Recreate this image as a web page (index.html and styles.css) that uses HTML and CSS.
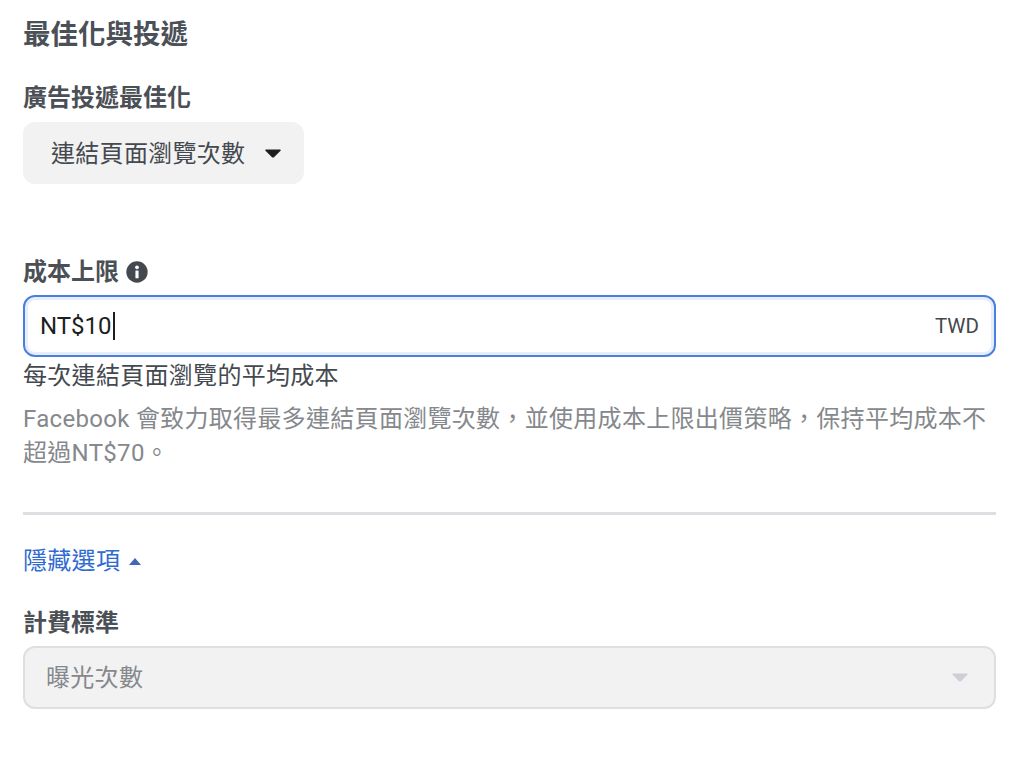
FILE: index.html
```html
<!DOCTYPE html>
<html lang="zh-Hant">
<head>
    <meta charset="UTF-8">
    <title>最佳化與投遞</title>
    <link rel="stylesheet" href="styles.css">
</head>
<body>
    <div class="panel">
        <h2 class="title">最佳化與投遞</h2>
        <div class="label goal-label">廣告投遞最佳化</div>
        <div class="goal-select">
            <span class="select-text">連結頁面瀏覽次數</span>
            <svg class="caret" width="16" height="9" viewBox="0 0 16 9"><path d="M1 0.5h14c.8 0 1 .8.5 1.3L9 8.2c-.6.5-1.4.5-2 0L.5 1.8C0 1.3.2.5 1 .5z" fill="#1c1e21"/></svg>
        </div>
        <div class="label cap-label">
            成本上限
            <svg class="info" width="22" height="22" viewBox="0 0 21 21"><circle cx="10.5" cy="10.5" r="10.2" fill="#444950"/><rect x="9" y="9" width="3" height="7.5" rx="0.6" fill="#fff"/><circle cx="10.5" cy="6" r="1.8" fill="#fff"/></svg>
        </div>
        <div class="cap-input">
            <span class="value">NT$10</span><span class="cursor"></span>
            <span class="currency">TWD</span>
        </div>
        <div class="hint">每次連結頁面瀏覽的平均成本</div>
        <p class="note">Facebook 會致力取得最多連結頁面瀏覽次數，並使用成本上限出價策略，保持平均成本不超過NT$70。</p>
        <hr class="divider">
        <div class="toggle">
            隱藏選項
            <svg width="12" height="7" viewBox="0 0 12 7"><path d="M6 0l6 7H0z" fill="#4267b2"/></svg>
        </div>
        <div class="label billing-label">計費標準</div>
        <div class="billing-select">
            <span class="select-text">曝光次數</span>
            <svg width="16" height="9" viewBox="0 0 16 9"><path d="M1 0.5h14c.8 0 1 .8.5 1.3L9 8.2c-.6.5-1.4.5-2 0L.5 1.8C0 1.3.2.5 1 .5z" fill="#ccd0d5"/></svg>
        </div>
    </div>
</body>
</html>
```

FILE: styles.css
```css
body {
    margin: 0;
    background: #fff;
    font-family: Roboto, "Noto Sans CJK TC", sans-serif;
    font-size: 24px;
    letter-spacing: 0.3px;
    color: #1c1e21;
}
.panel {
    padding: 15px 28px 0 23px;
}
.title {
    margin: 0;
    font-size: 27.5px;
    line-height: 40px;
    font-weight: 700;
    letter-spacing: 0;
    color: #4b4f56;
}
.label {
    font-weight: 700;
    font-size: 24px;
    line-height: 32px;
    letter-spacing: 0;
    color: #4b4f56;
}
.goal-label {
    margin-top: 27px;
}
.goal-select {
    display: inline-flex;
    align-items: center;
    gap: 20px;
    height: 62px;
    margin-top: 8px;
    padding: 0 23px 0 28px;
    border-radius: 12px;
    background: #f2f2f2;
    color: #444950;
}
.select-text {
    padding-bottom: 4px;
}
.cap-label {
    display: flex;
    align-items: center;
    gap: 7px;
    margin-top: 72px;
}
.cap-input {
    display: flex;
    align-items: center;
    box-sizing: border-box;
    height: 62px;
    margin-top: 7px;
    padding: 0 15px 0 15px;
    border: 2px solid #4a7fe0;
    border-radius: 12px;
    box-shadow: inset 0 0 0 3px #e7eefb;
    color: #1c1e21;
}
.value {
    font-size: 24px;
    letter-spacing: 0;
}
.cursor {
    width: 2px;
    height: 28px;
    margin-left: 1px;
    background: #1c1e21;
}
.currency {
    margin-left: auto;
    font-size: 20.5px;
    letter-spacing: 0;
    color: #444950;
}
.hint {
    margin-top: 1px;
    line-height: 36px;
    color: #444950;
}
.note {
    margin: 8px 0 0;
    line-height: 34px;
    color: #85888c;
}
.divider {
    height: 3px;
    margin: 42px 0 0;
    border: none;
    background: #dddfe2;
}
.toggle {
    display: flex;
    align-items: center;
    gap: 9px;
    margin-top: 28px;
    line-height: 36px;
    color: #2f6bd0;
}
.billing-label {
    margin-top: 28px;
}
.billing-select {
    display: flex;
    align-items: center;
    justify-content: space-between;
    box-sizing: border-box;
    height: 63px;
    margin-top: 7px;
    padding: 0 26px 0 21px;
    border: 2px solid #dddfe2;
    border-radius: 12px;
    background: #f2f2f2;
    color: #85888c;
}
```
